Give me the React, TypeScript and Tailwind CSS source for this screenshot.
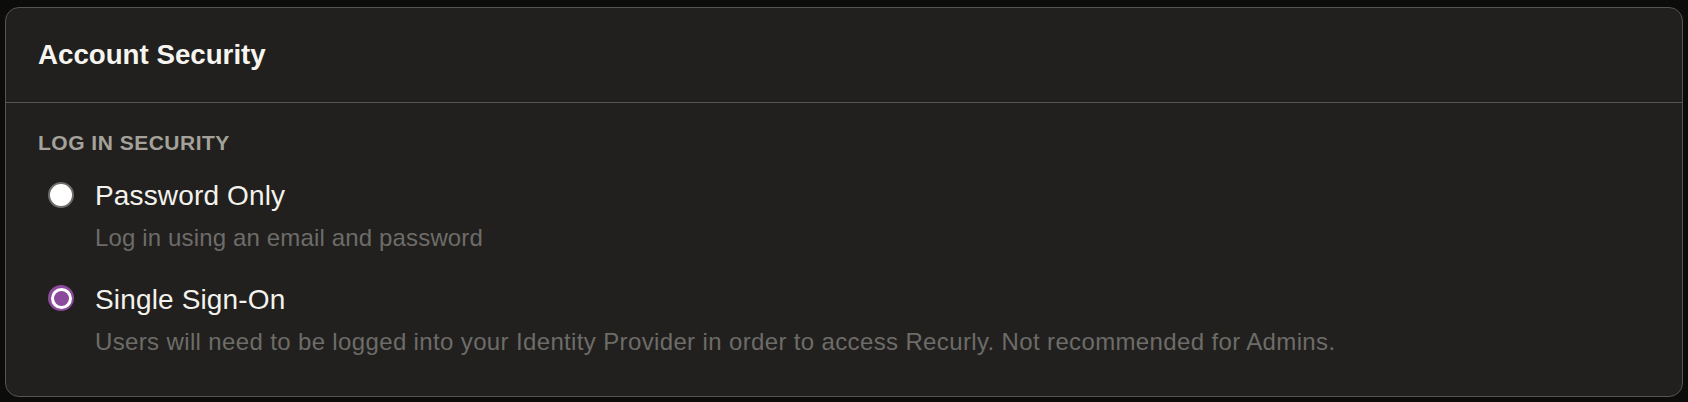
import React from "react";

function Radio({ checked }: { checked: boolean }) {
  if (checked) {
    return (
      <div className="w-[26px] h-[26px] rounded-full bg-[#8b4a9b] flex items-center justify-center shrink-0">
        <div className="w-[21px] h-[21px] rounded-full bg-white flex items-center justify-center">
          <div className="w-[15px] h-[15px] rounded-full bg-[#8b4a9b]" />
        </div>
      </div>
    );
  }
  return (
    <div className="w-[26px] h-[26px] rounded-full bg-white border-2 border-[#6e6d6a] shrink-0" />
  );
}

function Option({
  title,
  desc,
  checked,
  radioTop,
  descTracking,
}: {
  title: string;
  desc: string;
  checked: boolean;
  radioTop: string;
  descTracking: string;
}) {
  return (
    <div className="flex pl-[10px]">
      <div className={radioTop}>
        <Radio checked={checked} />
      </div>
      <div className="flex flex-col pl-[21px]">
        <div className="text-[28px] leading-[32px] tracking-[0.15px] text-[#f3f2ed]">{title}</div>
        <div className={"mt-[12px] text-[24px] leading-[28px] text-[#6d6c69] " + descTracking}>{desc}</div>
      </div>
    </div>
  );
}

export default function App() {
  return (
    <div
      className="w-[1688px] h-[402px] bg-[#0c0c0b] pt-[7px] px-[5px] pb-[5px]"
      style={{ fontFamily: '"Liberation Sans", Arial, sans-serif' }}
    >
      <div className="h-[390px] rounded-[14px] border border-[#56544e] bg-[#21201e] overflow-hidden">
        <div className="px-8 py-[31px] border-b border-[#56544e]">
          <div className="text-[27.7px] leading-[32px] font-bold text-[#f6f5f0]">
            Account Security
          </div>
        </div>
        <div className="px-8 pt-[28px]">
          <div className="text-[21px] leading-[24px] tracking-[0.5px] font-bold text-[#a4a29a] uppercase">
            Log in Security
          </div>
          <div className="mt-[25px] flex flex-col gap-[32px]">
            <Option
              title="Password Only"
              desc="Log in using an email and password"
              checked={false}
              radioTop="mt-[2px]"
              descTracking="tracking-[0.15px]"
            />
            <Option
              title="Single Sign-On"
              desc="Users will need to be logged into your Identity Provider in order to access Recurly. Not recommended for Admins."
              checked={true}
              radioTop="mt-[1px]"
              descTracking="tracking-[0.36px]"
            />
          </div>
        </div>
      </div>
    </div>
  );
}
